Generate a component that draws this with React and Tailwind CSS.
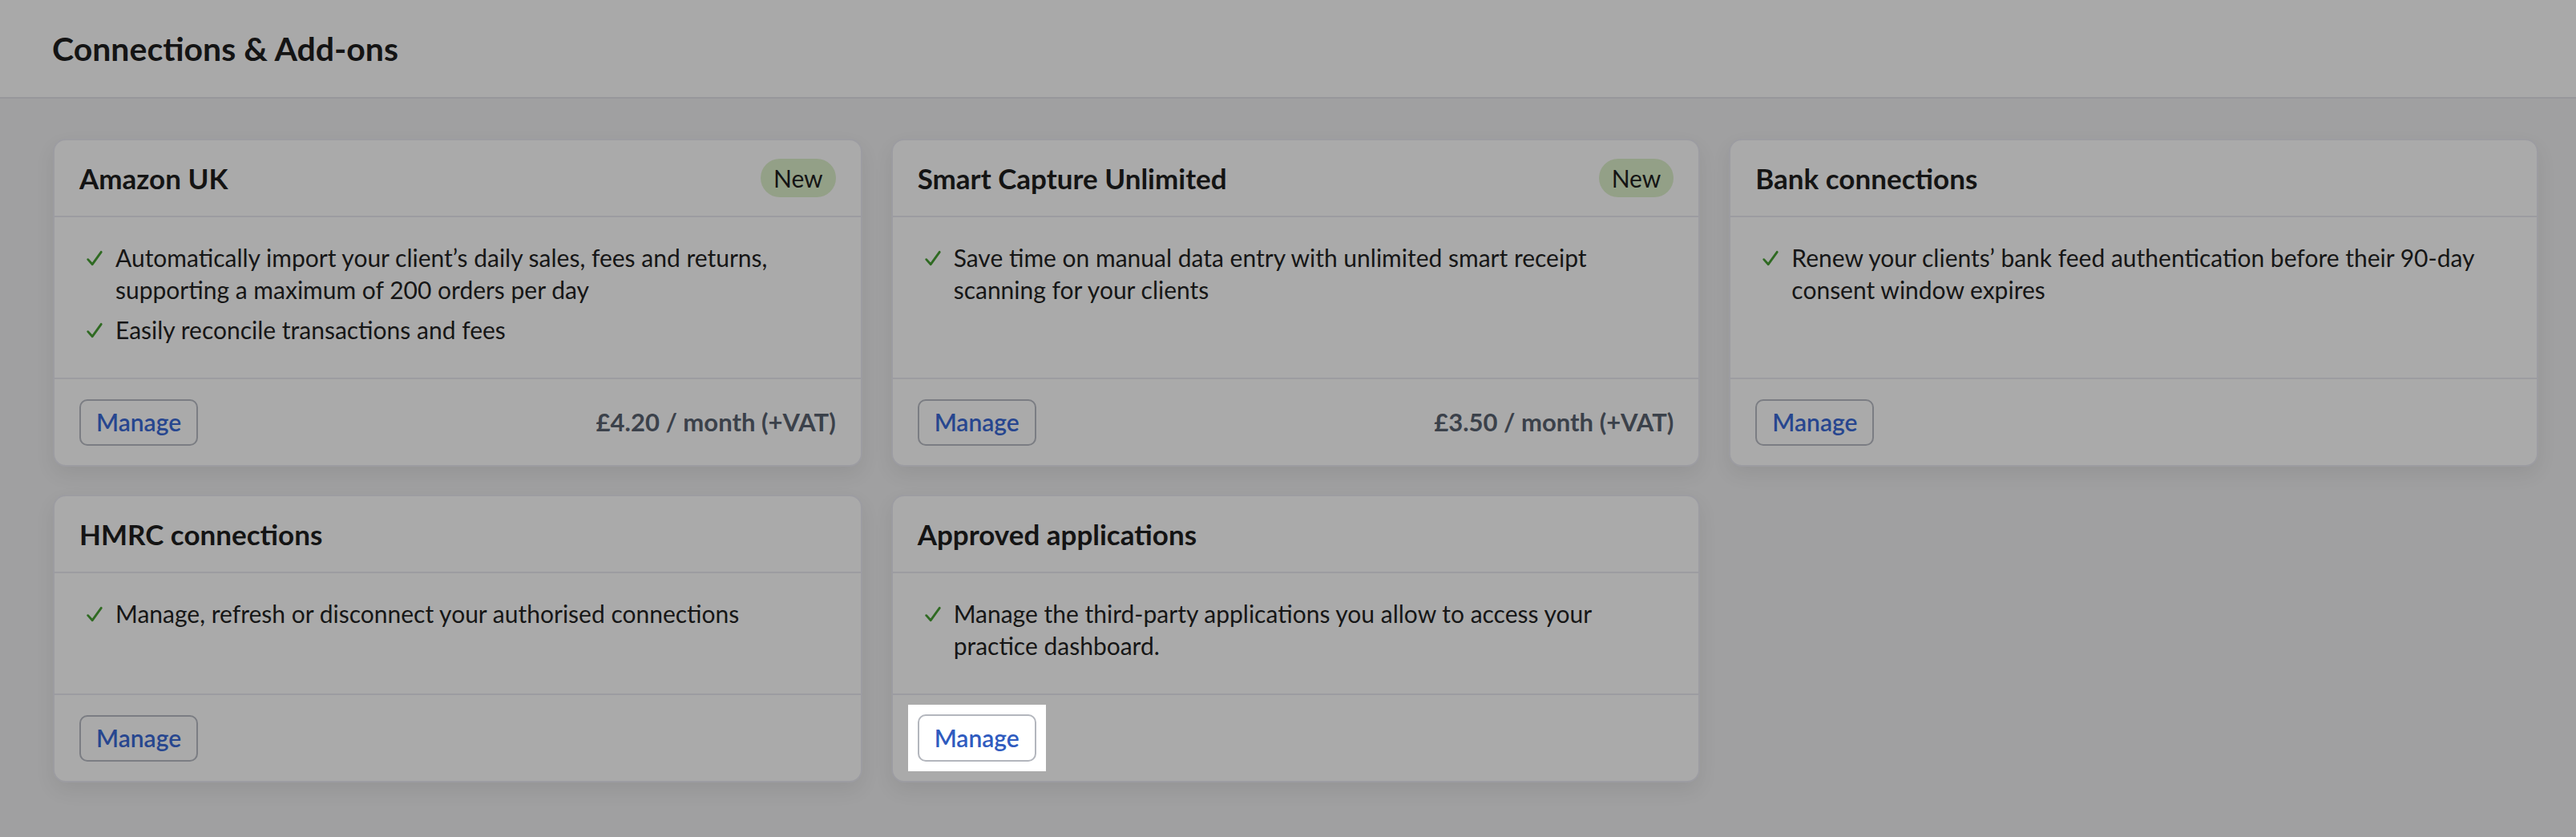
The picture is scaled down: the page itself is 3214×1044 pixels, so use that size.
import React from "react";

const Check = () => (
  <svg viewBox="0 0 20 20" className="w-[22px] h-[22px] shrink-0 mt-[10px]" fill="none">
    <path d="M2.5 11.5 L7.5 17 L17.5 3" stroke="#2f6a22" strokeWidth="2.6" strokeLinecap="round" strokeLinejoin="round" />
  </svg>
);

const Manage = ({ highlight }) =>
  highlight ? (
    <div className="-m-[12px] p-[12px] bg-white inline-flex">
      <button className="h-[59px] px-[19px] rounded-[10px] border-2 border-[#b3b6bd] bg-white text-[30px] font-semibold text-[#2f5bbf]">
        Manage
      </button>
    </div>
  ) : (
    <button className="h-[58px] px-[19px] rounded-[10px] border-2 border-[#7b7d83] bg-transparent text-[30px] font-semibold text-[#27468f]">
      Manage
    </button>
  );

const Card = ({ title, isNew, items, price, highlight }) => (
  <div className="flex flex-col rounded-[16px] border-2 border-[#9c9ca1] bg-[#aaaaaa] shadow-[0_10px_24px_rgba(0,0,0,0.07)]">
    <div className="h-[96px] flex items-center justify-between px-[31px] border-b-2 border-[#9c9ca1]">
      <h2 className="text-[35px] font-bold text-[#141414] leading-none">{title}</h2>
      {isNew && (
        <span className="h-[48px] px-[16px] rounded-full bg-[#93a087] flex items-center text-[30px] text-[#141414]">
          New
        </span>
      )}
    </div>
    <ul className="flex-1 pt-[30px] pb-[30px] pl-[39px] pr-[31px]">
      {items.map((t, i) => (
        <li key={i} className="flex gap-[15px] mb-[10px] text-[30px] leading-[40px] text-[#161616]">
          <Check />
          <span>{t}</span>
        </li>
      ))}
    </ul>
    <div className="h-[109px] flex items-center justify-between px-[31px] border-t-2 border-[#9c9ca1]">
      <Manage highlight={highlight} />
      {price && <span className="text-[31px] font-bold text-[#3b414a]">{price}</span>}
    </div>
  </div>
);

export default function App() {
  return (
    <div className="min-h-screen bg-[#a0a0a1]" style={{ fontFamily: "Lato, 'Noto Sans', sans-serif" }}>
      <header className="h-[123px] bg-[#a9a9a9] border-b-2 border-[#97979b] flex items-center px-[65px]">
        <h1 className="text-[41px] font-bold text-[#141414]">Connections &amp; Add-ons</h1>
      </header>
      <main className="grid grid-cols-3 gap-x-[36px] gap-y-[35px] pl-[66px] pr-[47px] pt-[50px] pb-[40px]">
        <Card
          title="Amazon UK"
          isNew
          items={[
            "Automatically import your client’s daily sales, fees and returns, supporting a maximum of 200 orders per day",
            "Easily reconcile transactions and fees",
          ]}
          price="£4.20 / month (+VAT)"
        />
        <Card
          title="Smart Capture Unlimited"
          isNew
          items={["Save time on manual data entry with unlimited smart receipt scanning for your clients"]}
          price="£3.50 / month (+VAT)"
        />
        <Card
          title="Bank connections"
          items={["Renew your clients’ bank feed authentication before their 90-day consent window expires"]}
        />
        <Card title="HMRC connections" items={["Manage, refresh or disconnect your authorised connections"]} />
        <Card
          title="Approved applications"
          items={["Manage the third-party applications you allow to access your practice dashboard."]}
          highlight
        />
      </main>
    </div>
  );
}
